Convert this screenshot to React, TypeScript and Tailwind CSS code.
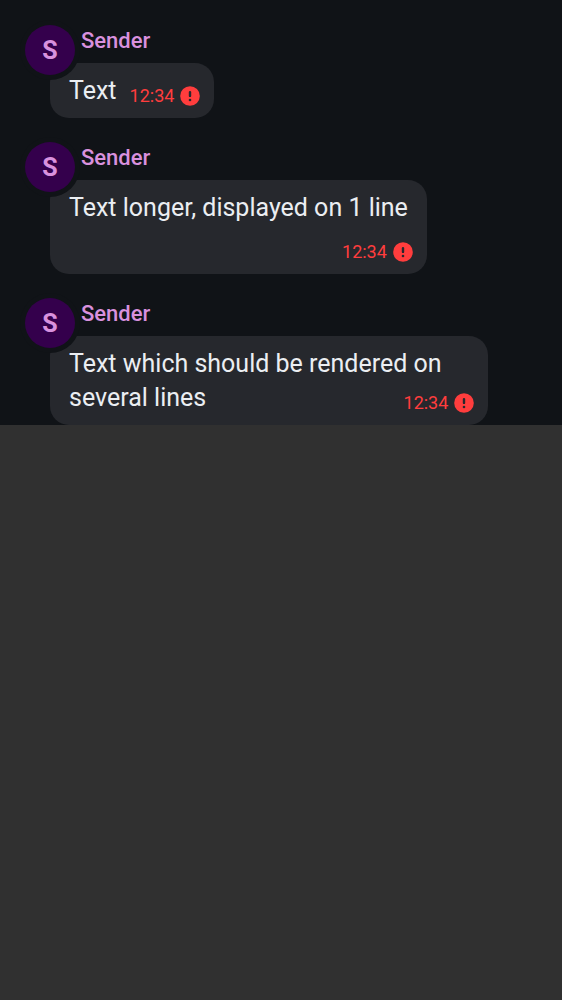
type Layout = "inline" | "below" | "overlay";

interface Message {
  id: number;
  sender: string;
  text: string;
  time: string;
  layout: Layout;
}

const messages: Message[] = [
  { id: 1, sender: "Sender", text: "Text", time: "12:34", layout: "inline" },
  { id: 2, sender: "Sender", text: "Text longer, displayed on 1 line", time: "12:34", layout: "below" },
  { id: 3, sender: "Sender", text: "Text which should be rendered on several lines", time: "12:34", layout: "overlay" },
];

const bodyLayout: Record<Layout, string> = {
  inline: "flex items-end",
  below: "flex flex-col",
  overlay: "grid",
};

const textLayout: Record<Layout, string> = {
  inline: "pr-[13px] pl-[19px]",
  below: "px-[19px]",
  overlay: "col-start-1 row-start-1 px-[19px]",
};

const timeLayout: Record<Layout, string> = {
  inline: "",
  below: "mt-[17px] self-end",
  overlay: "col-start-1 row-start-1 self-end justify-self-end",
};

function ErrorIcon() {
  return (
    <svg viewBox="0 0 20 20" className="size-5" role="img" aria-label="Sending failed">
      <circle cx="10" cy="10" r="9.8" fill="#ff3d3d" />
      <rect x="8.8" y="4.9" width="2.4" height="6.2" rx="1.2" fill="#26282d" />
      <circle cx="10" cy="14" r="1.3" fill="#26282d" />
    </svg>
  );
}

function MessageItem({ message }: { message: Message }) {
  const { sender, text, time, layout } = message;
  return (
    <article className="flex flex-col items-start">
      <header className="relative z-10 -mb-3 flex items-start gap-[6px] pl-[25px]">
        <div
          aria-hidden="true"
          className="flex size-[50px] items-center justify-center rounded-full bg-[#34004c] text-[25px] leading-none font-bold text-[#d991de] ring-[5px] ring-[#101317]"
        >
          S
        </div>
        <h2 className="pt-[2px] text-[22px] leading-[28px] font-medium text-[#d991de]">{sender}</h2>
      </header>
      <div className={`ml-[50px] max-w-[78%] rounded-[19px] bg-[#26282d] pt-[11px] pb-[10px] ${bodyLayout[layout]}`}>
        <p className={`text-[25px] leading-[34px] text-[#ebeef2] ${textLayout[layout]}`}>{text}</p>
        <div className={`flex items-center gap-[6px] pr-[14px] pb-[2px] ${timeLayout[layout]}`}>
          <time className="text-[18px] leading-[20px] text-[#ff3d3d]">{time}</time>
          <ErrorIcon />
        </div>
      </div>
    </article>
  );
}

export default function App() {
  return (
    <div className="min-h-screen bg-[#303030] font-['Roboto',sans-serif]">
      <main className="flex flex-col gap-[24px] bg-[#101317] pt-[25px]">
        {messages.map((message) => (
          <MessageItem key={message.id} message={message} />
        ))}
      </main>
    </div>
  );
}
